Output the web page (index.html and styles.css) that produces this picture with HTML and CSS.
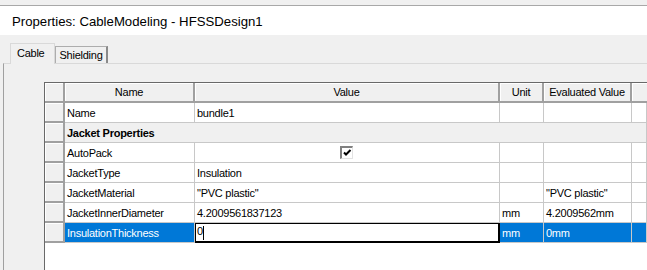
FILE: index.html
```html
<!DOCTYPE html>
<html lang="en">
<head>
  <meta charset="UTF-8">
  <link rel="stylesheet" href="styles.css">
  <title>Properties: CableModeling - HFSSDesign1</title>
</head>
<body>
<div class="titleBar">Properties: CableModeling - HFSSDesign1</div>

<div class="tabStrip">
  <span class="tab selected">Cable</span>
  <span class="tab">Shielding</span>
</div>

<div class="tabPage">
  <div class="grid">
    <table class="propTable">
      <colgroup>
        <col class="colHead">
        <col class="colName">
        <col class="colValue">
        <col class="colUnit">
        <col class="colEval">
        <col class="colRest">
      </colgroup>
      <tr class="headRow">
        <th class="rowHead"></th>
        <th>Name</th>
        <th>Value</th>
        <th>Unit</th>
        <th>Evaluated Value</th>
        <th></th>
      </tr>
      <tr>
        <td class="rowHead"></td>
        <td>Name</td>
        <td>bundle1</td>
        <td></td>
        <td></td>
        <td></td>
      </tr>
      <tr class="groupRow">
        <td class="rowHead"></td>
        <td colspan="5">Jacket Properties</td>
      </tr>
      <tr>
        <td class="rowHead"></td>
        <td>AutoPack</td>
        <td class="checkCell"><span class="checkBox"><svg width="9" height="8" viewBox="0 0 9 8"><path d="M1 3.5 L3 5.5 L7.5 1" fill="none" stroke="#000" stroke-width="2"/></svg></span></td>
        <td></td>
        <td></td>
        <td></td>
      </tr>
      <tr>
        <td class="rowHead"></td>
        <td>JacketType</td>
        <td>Insulation</td>
        <td></td>
        <td></td>
        <td></td>
      </tr>
      <tr>
        <td class="rowHead"></td>
        <td>JacketMaterial</td>
        <td>"PVC plastic"</td>
        <td></td>
        <td>"PVC plastic"</td>
        <td></td>
      </tr>
      <tr>
        <td class="rowHead"></td>
        <td>JacketInnerDiameter</td>
        <td>4.2009561837123</td>
        <td>mm</td>
        <td>4.2009562mm</td>
        <td></td>
      </tr>
      <tr class="selRow">
        <td class="rowHead"></td>
        <td>InsulationThickness</td>
        <td class="editCell"><span class="editText">0</span><span class="caret"></span></td>
        <td>mm</td>
        <td>0mm</td>
        <td></td>
      </tr>
    </table>
  </div>
</div>
</body>
</html>
```

FILE: styles.css
```css
body {
  margin: 0;
  width: 647px;
  height: 270px;
  overflow: hidden;
  background: #f0f0f0;
  font-family: "Liberation Sans", Arial, sans-serif;
  font-size: 11px;
  letter-spacing: -0.25px;
  color: #000;
}

.titleBar {
  height: 29px;
  margin-top: 5px;
  border-top: 1px solid #a8a8a8;
  background: #fff;
  padding-left: 12px;
  line-height: 31px;
  font-size: 13.2px;
  letter-spacing: 0;
}

.tabStrip {
  height: 28px;
  padding-left: 10px;
  display: flex;
  align-items: flex-end;
}

.tab {
  height: 16px;
  padding: 0 4px;
  line-height: 17px;
  border: 1px solid #adadad;
  border-bottom: none;
  background: #f0f0f0;
}

.tab.selected {
  height: 20px;
  line-height: 19px;
  padding: 0 9px 0 6px;
  border-color: #d9d9d9;
  z-index: 1;
  margin-bottom: -1px;
}

.tab + .tab {
  border-left: 1px solid #adadad;
  border-right: 2px solid #8a8a8a;
  padding: 0 3px 0 4px;
}

.tabPage {
  margin-left: 3px;
  border-left: 1px solid #a0a0a0;
  border-top: 1px solid #d9d9d9;
  height: 207px;
  box-sizing: border-box;
  padding: 18px 0 0 40px;
  overflow: hidden;
}

.grid {
  background: #fff;
  border-left: 1px solid #696969;
  border-top: 1px solid #696969;
  height: 200px;
}

.propTable {
  border-collapse: separate;
  border-spacing: 0;
  table-layout: fixed;
  width: 602px;
}

.colHead { width: 20px; }
.colName { width: 130px; }
.colValue { width: 305px; }
.colUnit { width: 44px; }
.colEval { width: 88px; }
.colRest { width: 15px; }

.propTable td,
.propTable th {
  height: 19px;
  padding: 0 2px;
  border-right: 1px solid #c8c8c8;
  border-bottom: 1px solid #c8c8c8;
  white-space: nowrap;
  overflow: hidden;
  text-align: left;
  font-weight: normal;
  box-sizing: border-box;
}

.propTable tr {
  height: 20px;
}

.headRow {
  height: 19px;
}

.headRow th {
  height: 19px;
  text-align: center;
  background: #f0f0f0;
  border-right: 2px solid #a0a0a0;
  border-bottom: 2px solid #a0a0a0;
  box-shadow: inset 1px 1px 0 #fff;
}

.headRow th:last-child {
  border-right: none;
}

.propTable .rowHead {
  background: #f0f0f0;
  border-right: 2px solid #a0a0a0;
  border-bottom: 2px solid #a0a0a0;
  box-shadow: inset 1px 1px 0 #fff;
}

.groupRow td {
  background: #f0f0f0;
  font-weight: bold;
}

.propTable td.checkCell {
  text-align: center;
}

.checkBox {
  display: inline-block;
  width: 13px;
  height: 13px;
  box-sizing: border-box;
  background: #fff;
  border-top: 2px solid #808080;
  border-left: 2px solid #808080;
  border-right: 1px solid #e3e3e3;
  border-bottom: 1px solid #e3e3e3;
  vertical-align: middle;
  margin-left: -1px;
}

.checkBox svg {
  display: block;
  margin: 1px 0 0 1px;
}

.selRow td {
  background: #0078d7;
  color: #fff;
}

.propTable .selRow .rowHead {
  background: #f0f0f0;
}

.propTable .selRow td.editCell {
  background: #fff;
  color: #000;
  border: 1px solid #000;
  border-right-width: 2px;
  border-bottom-width: 2px;
  padding-left: 1px;
}

.caret {
  display: inline-block;
  width: 1px;
  height: 14px;
  background: #000;
  vertical-align: middle;
}
```
